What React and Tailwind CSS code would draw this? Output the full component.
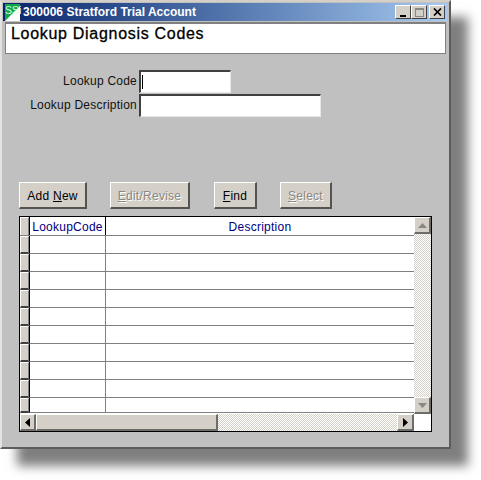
const F = { fontFamily: '"Liberation Sans", Arial, sans-serif' };

function Btn({ w, ml, disabled, pre, u, post }) {
  return (
    <div
      className={`h-[27px] pt-[1px] flex items-center justify-center text-[12px] tracking-[0.25px] bg-[#d4d0c8] border-t border-l border-r-2 border-b-2 border-t-white border-l-white border-r-[#55534f] border-b-[#55534f] ${disabled ? "text-[#8a8883] [text-shadow:1px_1px_0_#fff]" : "text-black"}`}
      style={{ width: w, marginLeft: ml }}
    >
      <span>
        {pre}
        <span className="underline">{u}</span>
        {post}
      </span>
    </div>
  );
}

function Row({ last }) {
  return (
    <div className={`flex ${last ? "h-[15px]" : "h-[18px]"}`}>
      <div className="w-[9px] bg-[#d4d0c8] border-t border-l border-t-white border-l-white border-b-2 border-b-[#404040] border-r border-r-[#808080]" />
      <div className="w-[76px] bg-white border-l border-l-black border-b border-b-[#808080]" />
      <div className="flex-1 bg-white border-l border-l-[#808080] border-b border-b-[#808080]" />
    </div>
  );
}

function ScrollBtn({ children, className = "" }) {
  return (
    <div className={`w-[17px] h-[17px] shrink-0 flex items-center justify-center bg-[#d4d0c8] border-t border-l border-t-white border-l-white border-r-2 border-b-2 border-r-[#6e6c68] border-b-[#6e6c68] ${className}`}>
      {children}
    </div>
  );
}

export default function App() {
  return (
    <div className="w-[481px] h-[480px] bg-white overflow-hidden" style={F}>
      <div className="w-[451px] h-[449px] bg-[#c0c0c0] border-t-2 border-l-2 border-t-[#d4d0c8] border-l-[#e4e2dc] border-r-2 border-b-2 border-r-[#5c5c5c] border-b-[#5c5c5c] shadow-[17px_17px_10px_0_rgba(0,0,0,0.5)] pt-px pl-px pr-[2px]">
        <div className="h-[18px] flex items-center bg-gradient-to-r from-[#0a246a] to-[#a6caf0]">
          <svg width="17" height="17" viewBox="0 0 17 17" className="ml-[2px] shrink-0">
            <rect width="15" height="17" fill="#fff" />
            <path d="M0 0H15V2L0 17Z" fill="#12a84a" />
            <text x="0" y="10" fontSize="10.5" fill="#d8ffd8" fontFamily="Liberation Sans">
              SS<tspan fill="#ffffff">i</tspan>
            </text>
          </svg>
          <div className="ml-[1px] text-white font-bold text-[12px] whitespace-nowrap">300006 Stratford Trial Account</div>
          <div className="flex-1" />
          <div className="flex items-center mr-[2px]">
            <div className="w-[16px] h-[14px] bg-[#d4d0c8] border-t border-l border-t-white border-l-white border-r border-b border-r-[#404040] border-b-[#404040] flex items-end justify-center pb-[1px]">
              <div className="w-[6px] h-[2px] bg-black" />
            </div>
            <div className="w-[16px] h-[14px] bg-[#d4d0c8] border-t border-l border-t-white border-l-white border-r border-b border-r-[#404040] border-b-[#404040] flex items-center justify-center">
              <div className="w-[9px] h-[9px] border border-t-2 border-[#8a8883]" />
            </div>
            <div className="w-[16px] h-[14px] ml-[2px] bg-[#d4d0c8] border-t border-l border-t-white border-l-white border-r border-b border-r-[#404040] border-b-[#404040] flex items-center justify-center">
              <svg width="9" height="8" viewBox="0 0 9 8">
                <path d="M1 0.5L8 7.5M8 0.5L1 7.5" stroke="#000" strokeWidth="1.7" />
              </svg>
            </div>
          </div>
        </div>

        <div className="h-[32px] mt-[1px] ml-[2px] mr-[1px] bg-white border-t-2 border-l border-[#808080] border-r border-b pl-[5px] pt-px text-[16px] leading-[17px] tracking-[0.7px] text-black [-webkit-text-stroke:0.3px_#000]">
          Lookup Diagnosis Codes
        </div>

        <div className="mt-[15px] flex items-center h-[24px]">
          <div className="w-[134px] text-right text-[12px] tracking-[0.23px] text-[#111]">Lookup Code</div>
          <div className="ml-[2px] w-[92px] h-[23px] bg-white border-t-2 border-l-2 border-t-[#404040] border-l-[#404040] border-r border-b border-r-[#e8e8e8] border-b-[#e8e8e8] flex items-center pl-[1px]">
            <div className="w-px h-[14px] bg-black" />
          </div>
        </div>
        <div className="flex items-center h-[24px]">
          <div className="w-[134px] text-right text-[12px] tracking-[0.23px] text-[#111]">Lookup Description</div>
          <div className="ml-[2px] w-[182px] h-[23px] bg-white border-t-2 border-l-2 border-t-[#404040] border-l-[#404040] border-r border-b border-r-[#e8e8e8] border-b-[#e8e8e8]" />
        </div>

        <div className="mt-[65px] flex pl-[16px]">
          <Btn w={68} ml={0} pre="Add " u="N" post="ew" />
          <Btn w={80} ml={23} disabled u="E" post="dit/Revise" />
          <Btn w={43} ml={24} u="F" post="ind" />
          <Btn w={52} ml={23} disabled u="S" post="elect" />
        </div>

        <div className="mt-[7px] ml-[16px] w-[413px] h-[216px] border border-black flex flex-col bg-white">
          <div className="flex flex-1 min-h-0">
            <div className="flex-1 flex flex-col min-w-0">
              <div className="flex h-[19px] pt-px text-[12px] tracking-[0.25px] text-[#000080] border-b border-b-[#808080]">
                <div className="w-[9px] -mt-px bg-[#d4d0c8] border-t border-l border-t-white border-l-white border-r border-r-[#808080]" />
                <div className="w-[76px] -mt-px pt-px border-l border-l-black flex items-center justify-center">LookupCode</div>
                <div className="flex-1 -mt-px pt-px border-l border-l-black flex items-center justify-center">Description</div>
              </div>
              <Row /><Row /><Row /><Row /><Row /><Row /><Row /><Row /><Row /><Row last />
            </div>
            <div className="w-[17px] flex flex-col bg-[repeating-conic-gradient(#d4d0c8_0_25%,#fff_0_50%)] bg-[length:2px_2px]">
              <ScrollBtn>
                <svg width="9" height="5" viewBox="0 0 9 5"><path d="M4.5 0L9 5H0Z" fill="#8a8883" /></svg>
              </ScrollBtn>
              <div className="flex-1" />
              <ScrollBtn>
                <svg width="9" height="5" viewBox="0 0 9 5"><path d="M0 0H9L4.5 5Z" fill="#8a8883" /></svg>
              </ScrollBtn>
            </div>
          </div>
          <div className="flex h-[17px]">
            <div className="flex-1 flex bg-[repeating-conic-gradient(#d4d0c8_0_25%,#fff_0_50%)] bg-[length:2px_2px]">
              <ScrollBtn className="!w-[16px]">
                <svg width="5" height="9" viewBox="0 0 5 9"><path d="M5 0V9L0 4.5Z" fill="#000" /></svg>
              </ScrollBtn>
              <div className="w-[182px] h-[17px] bg-[#d4d0c8] border-t border-l border-t-white border-l-white border-r-2 border-b-2 border-r-[#6e6c68] border-b-[#6e6c68]" />
              <div className="flex-1" />
              <ScrollBtn>
                <svg width="5" height="9" viewBox="0 0 5 9"><path d="M0 0V9L5 4.5Z" fill="#000" /></svg>
              </ScrollBtn>
            </div>
            <div className="w-[17px] bg-white" />
          </div>
        </div>
      </div>
    </div>
  );
}
